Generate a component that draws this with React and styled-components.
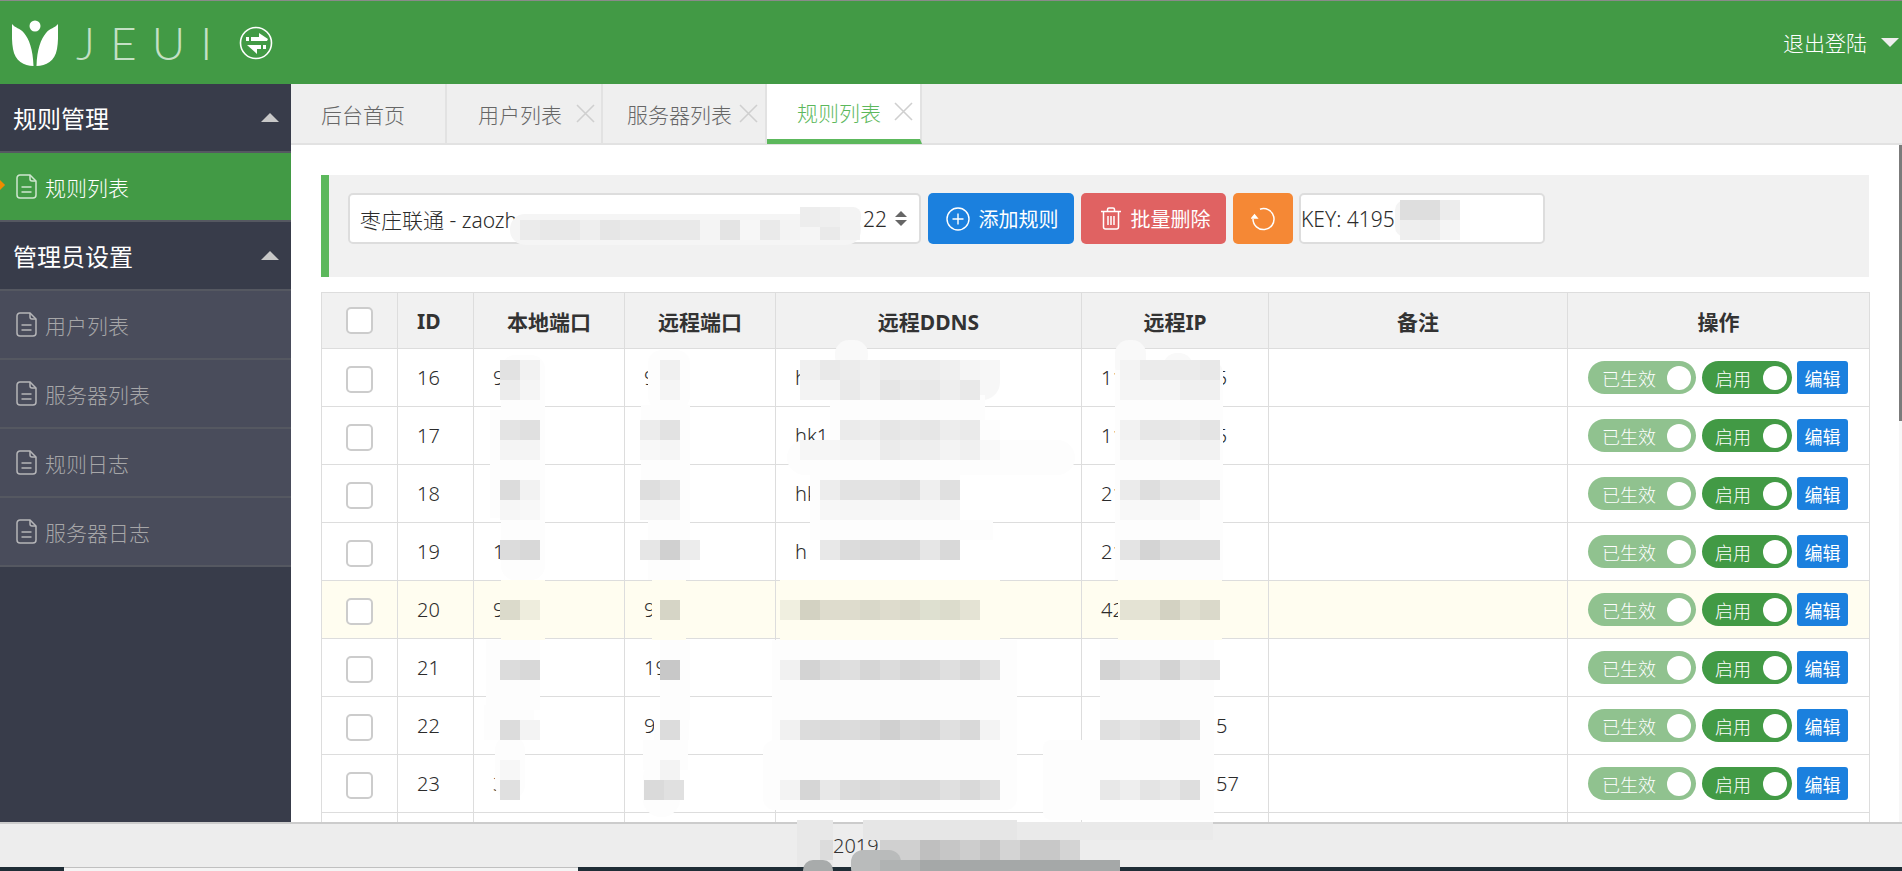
import React from "react";
import styled, { createGlobalStyle } from "styled-components";

const GREEN = "#429a45";
const LIGHT_GREEN = "#5cb85c";

const GlobalStyle = createGlobalStyle`
  html, body { margin: 0; padding: 0; }
  body {
    font-family: "Noto Sans", "Noto Sans CJK SC", sans-serif;
    font-weight: 300;
    color: #2b2b2b;
    overflow: hidden;
  }
`;

const rows = [
  { id: 16, local: "9", remote: "9", ddns: "h", ip: "11", tail: "5", tailGap: 92 },
  { id: 17, ddns: "hk1", ip: "11", tail: "5", tailGap: 92 },
  { id: 18, ddns: "hk", ip: "21" },
  { id: 19, local: "1", ddns: "h5", ip: "21" },
  { id: 20, local: "9", remote: "9", ip: "42", warn: true },
  { id: 21, remote: "19" },
  { id: 22, remote: "9", ip: "", tail: "5", tailGap: 115 },
  { id: 23, local: "3", ip: "", tail: "57", tailGap: 115 },
];

const Page = styled.div`
  position: relative;
  width: 1902px;
  height: 871px;
  display: flex;
  flex-direction: column;
  overflow: hidden;
  background: #fff;
`;

const Header = styled.header`
  height: 83px;
  flex: none;
  border-top: 1px solid #8a8a8a;
  background: ${GREEN};
  display: flex;
  align-items: center;
  justify-content: space-between;
  padding-right: 3px;
`;

const Brand = styled.div`
  display: flex;
  align-items: center;
  padding-left: 12px;
`;

const BrandName = styled.span`
  font-family: "Lato", sans-serif;
  font-weight: 300;
  font-size: 46px;
  line-height: 46px;
  letter-spacing: 15px;
  color: #c4e0c5;
  margin-left: 18px;
  width: 163px;
`;

const Account = styled.div`
  display: flex;
  align-items: center;
  gap: 14px;
  color: #fff;
  font-size: 21px;
  margin-top: -1px;
`;

const CaretDown = styled.span`
  width: 0;
  height: 0;
  border-left: 9px solid transparent;
  border-right: 9px solid transparent;
  border-top: 9px solid #eee;
`;

const Body = styled.div`
  flex: 1;
  min-height: 0;
  display: flex;
`;

const Sidebar = styled.aside`
  width: 291px;
  flex: none;
  background: #383c4a;
`;

const GroupTitle = styled.div`
  height: 67px;
  display: flex;
  align-items: center;
  justify-content: space-between;
  padding: 0 12px 0 13px;
  border-bottom: 2px solid #555861;
  font-size: 24px;
  font-weight: 400;
  color: #fff;
`;

const CaretUp = styled.span`
  width: 0;
  height: 0;
  border-left: 9px solid transparent;
  border-right: 9px solid transparent;
  border-bottom: 9px solid #c8c8c8;
`;

const NavItem = styled.div`
  position: relative;
  height: 67px;
  display: flex;
  align-items: center;
  gap: 8px;
  padding-left: 16px;
  border-bottom: 2px solid #555861;
  font-size: 21px;
  background: ${(p) => (p.$active ? GREEN : "#494c5b")};
  color: ${(p) => (p.$active ? "#fff" : "#a6a6a8")};

  ${(p) =>
    p.$active &&
    `&::before {
      content: "";
      position: absolute;
      left: -7px;
      top: 27px;
      width: 10px;
      height: 10px;
      background: #f08c00;
      transform: rotate(45deg);
    }`}
`;

const Workspace = styled.div`
  flex: 1;
  min-width: 0;
  display: flex;
  flex-direction: column;
`;

const TabBar = styled.nav`
  height: 59px;
  flex: none;
  display: flex;
  background: #efefef;
  border-bottom: 2px solid #e2e2e2;
`;

const Tab = styled.div`
  width: ${(p) => p.$width}px;
  box-sizing: border-box;
  display: flex;
  align-items: center;
  padding-left: ${(p) => p.$pad}px;
  gap: ${(p) => p.$gap}px;
  border-right: 2px solid #e2e2e2;
  font-size: 21px;
  color: #666;
`;

const ActiveTab = styled(Tab)`
  background: #fff;
  color: ${LIGHT_GREEN};
  border-bottom: 5px solid ${LIGHT_GREEN};
  margin-bottom: -1px;
`;

const ContentRow = styled.div`
  flex: 1;
  min-height: 0;
  display: flex;
`;

const Content = styled.main`
  flex: 1;
  min-width: 0;
  overflow: hidden;
  padding: 30px 30px 0;
`;

const ScrollRail = styled.div`
  width: 3px;
  flex: none;
  background: #f7f7f7;
`;

const ScrollThumb = styled.div`
  height: 276px;
  background: #7b7b7b;
`;

const Toolbar = styled.section`
  height: 102px;
  box-sizing: border-box;
  display: flex;
  align-items: flex-start;
  gap: 7px;
  padding: 18px 0 0 19px;
  margin-bottom: 15px;
  background: #f1f1f1;
  border-left: 8px solid ${LIGHT_GREEN};
`;

const Select = styled.div`
  width: 573px;
  height: 51px;
  box-sizing: border-box;
  display: flex;
  align-items: center;
  justify-content: space-between;
  padding: 0 12px 0 10px;
  background: #fff;
  border: 2px solid #ddd;
  border-radius: 5px;
  font-size: 21px;
`;

const SelectEnd = styled.span`
  display: flex;
  align-items: center;
  gap: 8px;
`;

const SelectArrows = styled.span`
  display: flex;
  flex-direction: column;
  gap: 3px;

  &::before,
  &::after {
    content: "";
    width: 0;
    height: 0;
    border-left: 6px solid transparent;
    border-right: 6px solid transparent;
  }
  &::before { border-bottom: 6px solid #666; }
  &::after { border-top: 6px solid #666; }
`;

const Button = styled.button`
  width: ${(p) => p.$width}px;
  height: 51px;
  flex: none;
  display: flex;
  align-items: center;
  justify-content: center;
  gap: 9px;
  padding: 0 0 0 ${(p) => p.$pad || 0}px;
  border: none;
  border-radius: 5px;
  background: ${(p) => p.$color};
  color: #fff;
  font-family: inherit;
  font-size: 20px;
`;

const KeyBox = styled.div`
  width: 246px;
  height: 51px;
  box-sizing: border-box;
  display: flex;
  align-items: center;
  margin-left: -1px;
  background: #fff;
  border: 2px solid #ddd;
  border-radius: 5px;
  font-size: 21px;
`;

const Table = styled.table`
  width: 1548px;
  table-layout: fixed;
  border-collapse: collapse;
  font-size: 20px;
`;

const HeadRow = styled.tr`
  height: 56px;
  background: #f1f1f1;
`;

const Th = styled.th`
  border: 1px solid #ddd;
  padding: 0;
  padding-left: ${(p) => (p.$left ? "19px" : "0")};
  text-align: ${(p) => (p.$left ? "left" : "center")};
  font-size: 21px;
  font-weight: 700;
  color: #333;
`;

const Row = styled.tr`
  height: 58px;
  background: ${(p) => (p.$warn ? "#fffdf0" : "#fff")};
`;

const Td = styled.td`
  border: 1px solid #ddd;
  padding: 0 0 0 19px;
  white-space: nowrap;
  overflow: hidden;
`;

const CheckCell = styled.td`
  border: 1px solid #ddd;
  padding: 4px 0 0;
  text-align: center;
  line-height: 0;
`;

const HeadCheck = styled(CheckCell).attrs({ as: "th" })`
  padding: 0;
`;

const Check = styled.input.attrs({ type: "checkbox" })`
  appearance: none;
  width: 27px;
  height: 27px;
  margin: 0;
  background: #fff;
  border: 2px solid #ccc;
  border-radius: 5px;
`;

const Spacer = styled.span`
  display: inline-block;
  width: ${(p) => p.$width}px;
`;

const Actions = styled.div`
  display: flex;
  align-items: center;
  gap: 6px;
  padding-left: 1px;
`;

const Switch = styled.span`
  width: ${(p) => p.$width}px;
  height: 33px;
  box-sizing: border-box;
  display: flex;
  align-items: center;
  justify-content: space-between;
  padding: 0 5px 0 ${(p) => p.$pad}px;
  border-radius: 17px;
  background: ${(p) => p.$color};
  color: #fff;
  font-size: 18px;
`;

const Knob = styled.span`
  width: 24px;
  height: 24px;
  border-radius: 50%;
  background: #fff;
`;

const EditButton = styled.button`
  width: 51px;
  height: 33px;
  margin-left: -1px;
  padding: 0;
  border: none;
  border-radius: 3px;
  background: #1b80de;
  color: #fff;
  font-family: inherit;
  font-size: 18px;
`;

const Footer = styled.footer`
  height: 43px;
  flex: none;
  border-top: 2px solid #ccc;
  background: #ededed;
  padding-left: 833px;
  font-size: 20px;
  line-height: 44px;
  color: #333;
`;

const Taskbar = styled.div`
  height: 4px;
  flex: none;
  background: #1f2d36;
  padding-left: 64px;
`;

const TaskbarWindow = styled.div`
  width: 514px;
  height: 3px;
  background: #f4f4f4;
  border-top: 1px solid #c0c0c0;
`;

const Overlay = styled.svg`
  position: absolute;
  left: 0;
  top: 0;
  pointer-events: none;
`;

const Logo = () => (
  <svg width="46" height="48" viewBox="0 0 46 48" fill="#fff">
    <circle cx="23" cy="7" r="5.500" />
    <path d="M0 5c3 4 8 4 12 9 5 6 9 16 9.500 33C12 47 3 42 1 30-.500 22 0 12 0 5z" />
    <path d="M46 5c-3 4-8 4-12 9-5 6-9 16-9.500 33C34 47 43 42 45 30c1.500-8 1-18 1-25z" />
  </svg>
);

const SwapIcon = () => (
  <svg width="34" height="34" viewBox="0 0 34 34">
    <circle cx="17" cy="17" r="15.500" fill="none" stroke="#fff" strokeWidth="1.600" />
    <path d="M7 11h3v4H7zM12 11h8V7l9 6-1 2H12z" fill="#fff" />
    <path d="M27 19v4h-3v-4zM22 19H8l10 9v-5h4z" fill="#fff" />
  </svg>
);

const DocIcon = ({ color }) => (
  <svg width="21" height="25" viewBox="0 0 21 25" fill="none" stroke={color} strokeWidth="1.500">
    <path d="M4 1h10l6 6v14a3 3 0 0 1-3 3H4a3 3 0 0 1-3-3V4a3 3 0 0 1 3-3z" />
    <path d="M14 1v4a2 2 0 0 0 2 2h4" />
    <path d="M5.500 13h10M5.500 18h10" />
  </svg>
);

const CloseIcon = () => (
  <svg width="19" height="19" viewBox="0 0 19 19" stroke="#cfcfcf" strokeWidth="1.600">
    <path d="M1 1l17 17M18 1L1 18" />
  </svg>
);

const PlusIcon = () => (
  <svg width="24" height="24" viewBox="0 0 24 24" fill="none" stroke="#fff" strokeWidth="1.400">
    <circle cx="12" cy="12" r="11" />
    <path d="M12 6.500v11M6.500 12h11" />
  </svg>
);

const TrashIcon = () => (
  <svg width="22" height="23" viewBox="0 0 22 23" fill="none" stroke="#fff" strokeWidth="1.500">
    <path d="M1 4.500h20M7.500 4V2.500a1.500 1.500 0 0 1 1.500-1.500h4a1.500 1.500 0 0 1 1.500 1.500V4" />
    <path d="M3.500 5v15a2 2 0 0 0 2 2h11a2 2 0 0 0 2-2V5" />
    <path d="M8 9v9M11 9v9M14 9v9" />
  </svg>
);

const RefreshIcon = () => (
  <svg width="24" height="24" viewBox="0 0 24 24" fill="none" stroke="#fff" strokeWidth="1.500">
    <path d="M9 2.200A10.500 10.500 0 1 1 2 12" />
    <path d="M1 11l2.500-3 2.500 3z" fill="#fff" />
  </svg>
);

// the blurred-out patches that were painted over the screenshot
const SOFT = "#fdfdfd";
const CREAM = "#fffdf0";

const smears = [
  [510, 214, 351, 31, 15, "#f5f5f5"],
  [800, 207, 61, 20, 8, "#f3f3f3"],
  [1395, 200, 65, 37, 10, "#f4f4f4"],
  // local port
  [501, 355, 44, 225, 14, SOFT],
  [490, 410, 24, 108, 0, SOFT],
  [501, 580, 44, 60, 0, CREAM],
  [486, 640, 54, 70, 0, SOFT],
  [484, 705, 50, 35, 0, SOFT],
  [495, 735, 30, 65, 15, SOFT],
  // remote port
  [648, 350, 42, 60, 14, SOFT],
  [641, 405, 49, 115, 0, SOFT],
  [648, 520, 42, 60, 0, SOFT],
  [652, 580, 34, 60, 0, CREAM],
  [660, 640, 30, 80, 0, SOFT],
  [654, 720, 35, 20, 0, SOFT],
  [643, 740, 45, 30, 0, SOFT],
  [643, 760, 37, 57, 18, SOFT],
  // ddns
  [835, 340, 33, 30, 14, "#f9f9f9"],
  [800, 362, 200, 38, 18, "#f7f7f7"],
  [830, 395, 155, 30, 0, SOFT],
  [830, 420, 170, 22, 0, SOFT],
  [787, 440, 288, 35, 18, SOFT],
  [810, 475, 150, 50, 0, SOFT],
  [810, 520, 183, 20, 0, SOFT],
  [808, 540, 152, 40, 0, "#fff"],
  [780, 580, 220, 60, 0, CREAM],
  [772, 640, 245, 110, 0, SOFT],
  [763, 740, 254, 70, 12, SOFT],
  // remote ip
  [1115, 340, 31, 40, 14, "#f9f9f9"],
  [1163, 353, 30, 30, 14, "#f9f9f9"],
  [1197, 361, 26, 30, 12, "#f9f9f9"],
  [1115, 370, 108, 210, 0, SOFT],
  [1118, 580, 104, 60, 0, CREAM],
  [1100, 640, 114, 180, 0, SOFT],
  [1043, 740, 171, 80, 8, SOFT],
  // footer
  [797, 820, 36, 47, 0, "#e8e8e8"],
  [863, 820, 154, 20, 0, "#e6e6e6"],
  [1017, 822, 196, 18, 0, "#eaeaea"],
];

const g = (v) => `#${v}${v}${v}`;
const paint = (y, x, shades) => shades.map((s, i) => ({ x: x + i * 20, y, fill: s.length === 2 ? g(s) : `#${s}` }));

const mosaic = [
  // select
  ...paint(220, 520, ["eb", "e8", "e8", "ee", "e6", "e9", "e8", "e9", "e9", "f4", "e4", "f7", "ea", "f3", "f5", "ea", "f2"]),
  ...paint(207, 800, ["ed", "ef"]),
  // key
  ...paint(200, 1400, ["de", "de", "ec"]),
  ...paint(220, 1400, ["ee", "ed", "f4"]),
  // local port
  ...paint(360, 500, ["e2", "f2"]),
  ...paint(380, 500, ["ec", "f5"]),
  ...paint(420, 500, ["e4", "e0"]),
  ...paint(440, 500, ["f4", "f4"]),
  ...paint(480, 500, ["dc", "f2"]),
  ...paint(500, 500, ["f6", "f8"]),
  ...paint(540, 500, ["dc", "d8"]),
  ...paint(600, 500, ["dbdacb", "eeeddd"]),
  ...paint(660, 500, ["dc", "d8"]),
  ...paint(720, 500, ["dc", "f3"]),
  ...paint(760, 500, ["f7"]),
  ...paint(780, 500, ["e0"]),
  // remote port
  ...paint(360, 660, ["f0"]),
  ...paint(380, 660, ["f5"]),
  ...paint(420, 640, ["ec", "e2"]),
  ...paint(440, 640, ["f8", "f5"]),
  ...paint(480, 640, ["de", "e4"]),
  ...paint(500, 640, ["f5", "f5"]),
  ...paint(540, 640, ["e6", "d0", "ec"]),
  ...paint(600, 660, ["d6d5c6"]),
  ...paint(660, 660, ["c8"]),
  ...paint(720, 660, ["dc"]),
  ...paint(760, 660, ["f3"]),
  ...paint(780, 644, ["da", "e0"]),
  // ddns
  ...paint(360, 800, ["f0", "e9", "ec", "ef", "ec", "ed", "ed", "f0", "f5", "f7"]),
  ...paint(380, 800, ["f3", "f3", "ea", "f0", "e6", "ea", "e8", "ee", "e9"]),
  ...paint(420, 840, ["eb", "ed", "e6", "e8", "e6", "ed", "ea"]),
  ...paint(440, 800, ["f6", "f6", "f4", "f5", "eb", "ee", "ee", "f3", "f0", "f9"]),
  ...paint(480, 820, ["ed", "e3", "e3", "e3", "de", "ef", "e0"]),
  ...paint(500, 820, ["f7", "f6", "f6", "f7", "f7", "f6", "f7"]),
  ...paint(540, 820, ["e8", "dc", "d9", "da", "d9", "e6", "d9"]),
  ...paint(600, 780, ["f0efe0", "d3d2c2", "dedccd", "dedccd", "d9d8c9", "dedccd", "dad9ca", "dee0d0", "dcdccc", "e4e3d4"]),
  ...paint(660, 780, ["f1", "d3", "dc", "df", "d6", "dc", "d6", "d8", "df", "d8", "e3"]),
  ...paint(720, 780, ["f1", "dc", "da", "dc", "d9", "d0", "d8", "d6", "e0", "d9", "f3"]),
  ...paint(780, 780, ["f3", "d6", "e8", "dc", "d9", "dc", "d9", "d9", "e0", "d9", "e0"]),
  // remote ip
  ...paint(360, 1120, ["f3", "eb", "eb", "eb", "e8"]),
  ...paint(380, 1120, ["f5", "f5", "f5", "f0", "f0"]),
  ...paint(420, 1120, ["f2", "e7", "e7", "e9", "e4"]),
  ...paint(440, 1120, ["f5", "f5", "f5", "f2", "f2"]),
  ...paint(480, 1120, ["eb", "de", "e6", "e6", "e6"]),
  ...paint(500, 1120, ["f8", "f8", "f8", "f8"]),
  ...paint(540, 1120, ["e4", "d4", "dd", "dd", "dd"]),
  ...paint(600, 1120, ["e4e3d4", "e4e3d4", "d3d2c2", "e1e0d1", "dad9ca"]),
  ...paint(660, 1100, ["d3", "e0", "e2", "d3", "e3", "e0"]),
  ...paint(720, 1100, ["e0", "e5", "e0", "d9", "e0"]),
  ...paint(780, 1100, ["e8", "ee", "e4", "e8", "de"]),
  // footer
  ...paint(840, 880, ["d0", "d0", "bf", "c6", "cd", "c4", "d4", "c8", "c8", "d4"]),
];

const tabs = [
  { label: "用户列表", width: 156, pad: 31, gap: 14 },
  { label: "服务器列表", width: 164, pad: 24, gap: 7 },
];

const nav = ["用户列表", "服务器列表", "规则日志", "服务器日志"];

const RowActions = () => (
  <Actions>
    <Switch $width={108} $pad={14} $color="#90c28f">
      已生效
      <Knob />
    </Switch>
    <Switch $width={90} $pad={13} $color={GREEN}>
      启用
      <Knob />
    </Switch>
    <EditButton>编辑</EditButton>
  </Actions>
);

export default function App() {
  return (
    <Page>
      <GlobalStyle />
      <Header>
        <Brand>
          <Logo />
          <BrandName>JEUI</BrandName>
          <SwapIcon />
        </Brand>
        <Account>
          退出登陆
          <CaretDown />
        </Account>
      </Header>
      <Body>
        <Sidebar>
          <GroupTitle>
            规则管理
            <CaretUp />
          </GroupTitle>
          <NavItem $active>
            <DocIcon color="#cfe6cf" />
            规则列表
          </NavItem>
          <GroupTitle>
            管理员设置
            <CaretUp />
          </GroupTitle>
          {nav.map((label) => (
            <NavItem key={label}>
              <DocIcon color="#b5b5b8" />
              {label}
            </NavItem>
          ))}
        </Sidebar>
        <Workspace>
          <TabBar>
            <Tab $width={156} $pad={30} $gap={0}>后台首页</Tab>
            {tabs.map((t) => (
              <Tab key={t.label} $width={t.width} $pad={t.pad} $gap={t.gap}>
                {t.label}
                <CloseIcon />
              </Tab>
            ))}
            <ActiveTab $width={155} $pad={30} $gap={13}>
              规则列表
              <CloseIcon />
            </ActiveTab>
          </TabBar>
          <ContentRow>
            <Content>
              <Toolbar>
                <Select>
                  <span>枣庄联通 - zaozh</span>
                  <SelectEnd>
                    22
                    <SelectArrows />
                  </SelectEnd>
                </Select>
                <Button $width={146} $pad={2} $color="#1b80de">
                  <PlusIcon />
                  添加规则
                </Button>
                <Button $width={145} $pad={3} $color="#e06262">
                  <TrashIcon />
                  批量删除
                </Button>
                <Button $width={60} $color="#f58835">
                  <RefreshIcon />
                </Button>
                <KeyBox>KEY: 4195</KeyBox>
              </Toolbar>
              <Table>
                <colgroup>
                  {[76, 76, 151, 151, 306, 187, 299, 302].map((w, i) => (
                    <col key={i} width={w} />
                  ))}
                </colgroup>
                <thead>
                  <HeadRow>
                    <HeadCheck><Check /></HeadCheck>
                    <Th $left>ID</Th>
                    <Th>本地端口</Th>
                    <Th>远程端口</Th>
                    <Th>远程DDNS</Th>
                    <Th>远程IP</Th>
                    <Th>备注</Th>
                    <Th>操作</Th>
                  </HeadRow>
                </thead>
                <tbody>
                  {rows.map((r) => (
                    <Row key={r.id} $warn={r.warn}>
                      <CheckCell><Check /></CheckCell>
                      <Td>{r.id}</Td>
                      <Td>{r.local}</Td>
                      <Td>{r.remote}</Td>
                      <Td>{r.ddns}</Td>
                      <Td>
                        {r.ip}
                        {r.tail && <Spacer $width={r.tailGap} />}
                        {r.tail}
                      </Td>
                      <Td />
                      <Td><RowActions /></Td>
                    </Row>
                  ))}
                  <Row>
                    {[0, 1, 2, 3, 4, 5, 6, 7].map((i) => <Td key={i} />)}
                  </Row>
                </tbody>
              </Table>
            </Content>
            <ScrollRail>
              <ScrollThumb />
            </ScrollRail>
          </ContentRow>
        </Workspace>
      </Body>
      <Footer>2019</Footer>
      <Taskbar>
        <TaskbarWindow />
      </Taskbar>
      <Overlay width="1902" height="871" viewBox="0 0 1902 871">
        {smears.map(([x, y, w, h, rx, fill], i) => (
          <rect key={i} x={x} y={y} width={w} height={h} rx={rx} fill={fill} />
        ))}
        {mosaic.map((c, i) => (
          <rect key={i} x={c.x} y={c.y} width="20" height="20" fill={c.fill} />
        ))}
        <rect x="820" y="840" width="13" height="20" fill="#dcdcdc" />
        <rect x="803" y="860" width="30" height="20" rx="10" fill="#a8abab" />
        <rect x="851" y="850" width="50" height="30" rx="12" fill="#b9bbbb" />
        <rect x="880" y="860" width="40" height="11" fill="#b0b3b3" />
        <rect x="920" y="860" width="200" height="11" fill="#a5a8a8" />
      </Overlay>
    </Page>
  );
}
